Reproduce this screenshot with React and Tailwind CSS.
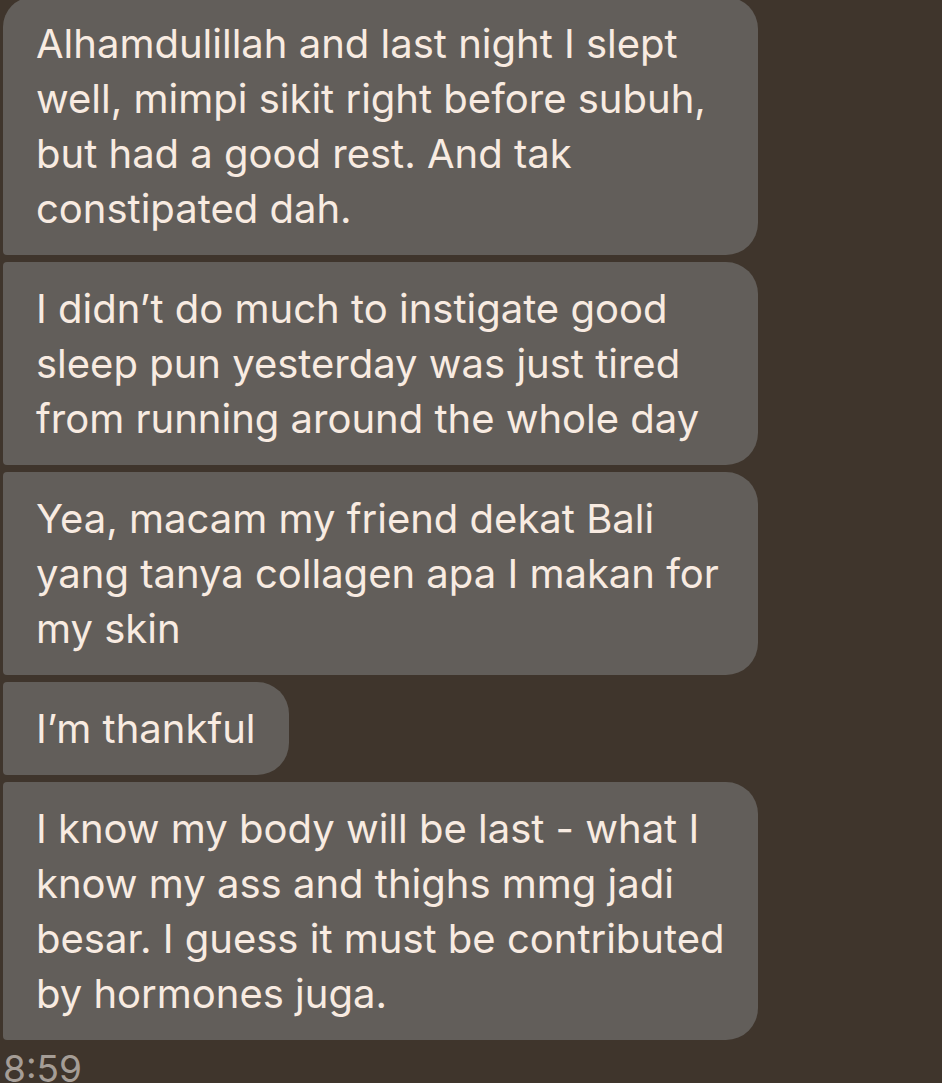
const messages = [
  {
    lines: [
      'Alhamdulillah and last night I slept',
      'well, mimpi sikit right before subuh,',
      'but had a good rest. And tak',
      'constipated dah.',
    ],
    first: true,
  },
  {
    lines: [
      'I didn\u2019t do much to instigate good',
      'sleep pun yesterday was just tired',
      'from running around the whole day',
    ],
  },
  {
    lines: [
      'Yea, macam my friend dekat Bali',
      'yang tanya collagen apa I makan for',
      'my skin',
    ],
  },
  { lines: ['I\u2019m thankful'], fit: true },
  {
    lines: [
      'I know my body will be last - what I',
      'know my ass and thighs mmg jadi',
      'besar. I guess it must be contributed',
      'by hormones juga.',
    ],
  },
]

function Bubble({ lines, first, fit }) {
  return (
    <div
      className={`bg-[#625e5a] px-[33px] py-[19px] text-[40px] leading-[55px] text-[#f8ebe1] ${
        first ? 'rounded-tl-[30px]' : 'rounded-tl-[4px]'
      } rounded-bl-[4px] rounded-r-[32px] ${fit ? 'w-fit' : 'w-[755px]'}`}
    >
      {lines.map((line) => (
        <div key={line} className="whitespace-nowrap">
          {line}
        </div>
      ))}
    </div>
  )
}

export default function App() {
  return (
    <div
      className="h-[1083px] w-[942px] overflow-hidden bg-[#3f352c] pl-[3px]"
      style={{ fontFamily: 'Inter, "Noto Sans", sans-serif' }}
    >
      <div className="-mt-[3px] flex flex-col items-start gap-[7px]">
        {messages.map((m, i) => (
          <Bubble key={i} {...m} />
        ))}
      </div>
      <div className="mt-[9px] text-[37px] leading-[40px] text-[#a59d96]">8:59</div>
    </div>
  )
}
